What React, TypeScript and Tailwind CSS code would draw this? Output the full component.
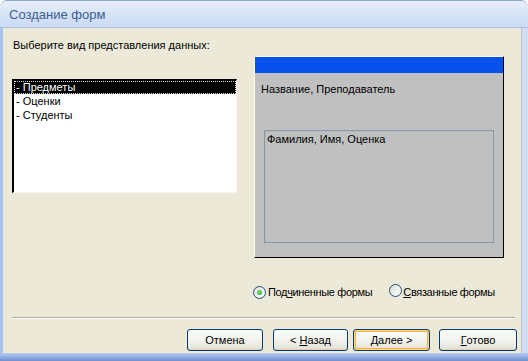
import React from "react";

const font = { fontFamily: '"Liberation Sans", Arial, sans-serif' };

function Radio({ checked }: { checked?: boolean }) {
  return (
    <span className="relative inline-flex h-[13px] w-[13px] shrink-0 items-center justify-center rounded-full border border-[#1c5180] bg-gradient-to-br from-[#dcdcd6] to-[#ffffff]">
      {checked && (
        <span className="h-[5px] w-[5px] rounded-full bg-[radial-gradient(circle_at_40%_40%,#7be27b,#21a121)]" />
      )}
    </span>
  );
}

function Button({
  children,
  isDefault,
  width,
}: {
  children: React.ReactNode;
  isDefault?: boolean;
  width: string;
}) {
  return (
    <button
      className={`flex h-[22px] ${width} items-center justify-center rounded-[3px] border border-[#003c74] bg-gradient-to-b from-[#ffffff] via-[#f4f3ee] to-[#e3e0d2] text-[11px] text-black ${
        isDefault
          ? "shadow-[inset_0_0_0_1px_#fbd58a,inset_0_0_0_2px_#f1b23e]"
          : "shadow-[inset_0_-1px_0_#d6d0c0]"
      }`}
    >
      {children}
    </button>
  );
}

export default function App() {
  return (
    <div className="h-[361px] w-[528px] overflow-hidden bg-white" style={font}>
      <div className="flex h-full flex-col rounded-t-[7px] border-t border-[#8ea6cc] bg-[#ece9d8]">
        {/* Title bar */}
        <div className="flex h-[27px] items-center rounded-t-[7px] border-b border-[#a8c0e6] bg-gradient-to-b from-[#e6eef9] to-[#c9daf3] pl-[9px]">
          <span className="text-[13px] leading-none text-[#3d5e93]">Создание форм</span>
        </div>

        <div className="flex flex-1 border-l-[3px] border-r-[6px] border-l-[#a9c2ea] border-r-[#cfdcf2]">
          <div className="flex flex-1 flex-col border-r border-[#b8c4d6] pt-[11px]">
            {/* Top area */}
            <div className="flex">
              <div className="flex w-[233px] flex-col pl-[9px]">
                <div className="pl-[1px] text-[11px] leading-[13px] text-black whitespace-nowrap">
                  Выберите вид представления данных:
                </div>
                <div className="mt-[27px] h-[114px] w-[225px] border-l-2 border-t-2 border-b border-r border-l-black border-t-black border-b-[#f7f5ec] border-r-[#f7f5ec] bg-white">
                  <div className="flex h-[13px] items-center border border-dotted border-[#ddd] bg-black pl-[1px] text-[11px] leading-[13px] text-white">
                    - Предметы
                  </div>
                  <div className="pl-[2px] text-[11px] leading-[14px] text-black">- Оценки</div>
                  <div className="pl-[2px] text-[11px] leading-[14px] text-black">- Студенты</div>
                </div>
              </div>

              {/* Preview */}
              <div className="ml-[18px] mt-[17px] flex h-[202px] w-[250px] flex-col border-l border-t border-r border-b border-l-[#fbfaf5] border-t-[#fbfaf5] border-r-black border-b-black bg-[#c0c0c0]">
                <div className="h-[16px] bg-[#0651ea]" />
                <div className="mt-[10px] pl-[6px] text-[11px] leading-[13px] text-black">
                  Название, Преподаватель
                </div>
                <div className="ml-[9px] mt-[34px] h-[113px] w-[230px] border border-[#8a97a4] shadow-[inset_1px_1px_0_#b3bac2] pl-[2px] pt-[2px] text-[11px] leading-[13px] text-black">
                  Фамилия, Имя, Оценка
                </div>
              </div>
            </div>

            {/* Radios */}
            <div className="mt-[28px] flex h-[13px] items-center pl-[250px] text-[11px] tracking-[-0.35px] text-black">
              <Radio checked />
              <span className="ml-[2px]">
                Под<span className="underline">ч</span>иненные формы
              </span>
              <span className="ml-[17px]">
                <Radio />
              </span>
              <span className="ml-[1px]">
                <span className="underline">С</span>вязанные формы
              </span>
            </div>

            {/* Separator */}
            <div className="ml-[9px] mr-[6px] mt-[18px] border-t border-b border-t-[#aca899] border-b-white" />

            {/* Buttons */}
            <div className="mt-[10px] flex pl-[184px]">
              <Button width="w-[76px]">Отмена</Button>
              <div className="ml-[10px]">
                <Button width="w-[75px]">
                  &lt; <span className="ml-[3px] underline">Н</span>азад
                </Button>
              </div>
              <div className="ml-[5px]">
                <Button isDefault width="w-[77px]">
                  <span className="underline">Д</span>алее &gt;
                </Button>
              </div>
              <div className="ml-[9px]">
                <Button width="w-[78px]">
                  <span className="underline">Г</span>отово
                </Button>
              </div>
            </div>
          </div>
        </div>

        {/* Bottom frame */}
        <div className="h-[8px] shrink-0 bg-gradient-to-b from-[#b6cbee] to-[#6f90d0]" />
      </div>
    </div>
  );
}
